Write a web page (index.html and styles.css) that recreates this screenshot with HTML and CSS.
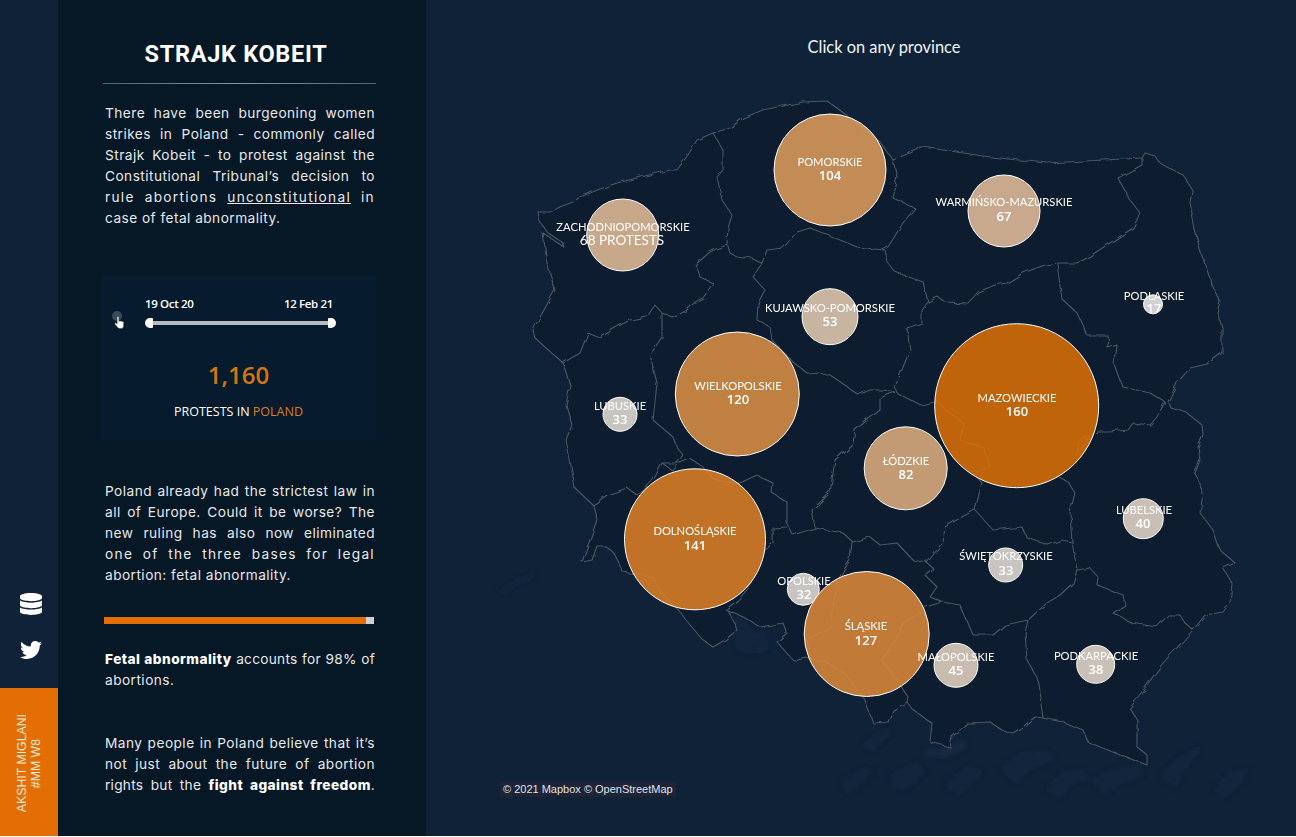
FILE: index.html
```html
<!DOCTYPE html>
<html lang="en">
<head>
  <meta charset="UTF-8">
  <title>Strajk Kobeit</title>
  <link rel="stylesheet" href="styles.css">
</head>
<body>
  <div class="page">

    <aside class="rail">
      <div class="rail-icons">
        <svg class="rail-icon" viewBox="0 0 448 512" preserveAspectRatio="none"><path d="M448 73.143v45.714C448 159.143 347.667 192 224 192S0 159.143 0 118.857V73.143C0 32.857 100.333 0 224 0s224 32.857 224 73.143zM448 176v102.857C448 319.143 347.667 352 224 352S0 319.143 0 278.857V176c48.125 33.143 136.208 48.572 224 48.572S399.874 209.143 448 176zm0 160v102.857C448 479.143 347.667 512 224 512S0 479.143 0 438.857V336c48.125 33.143 136.208 48.572 224 48.572S399.874 369.143 448 336z"/></svg>
        <svg class="rail-icon" viewBox="0 0 512 512"><path d="M459.37 151.716c.325 4.548.325 9.097.325 13.645 0 138.72-105.583 298.558-298.558 298.558-59.452 0-114.68-17.219-161.137-47.106 8.447.974 16.568 1.299 25.34 1.299 49.055 0 94.213-16.568 130.274-44.832-46.132-.975-84.792-31.188-98.112-72.772 6.498.974 12.995 1.624 19.818 1.624 9.421 0 18.843-1.3 27.614-3.573-48.081-9.747-84.143-51.98-84.143-102.985v-1.299c13.969 7.797 30.214 12.67 47.431 13.319-28.264-18.843-46.781-51.005-46.781-87.391 0-19.492 5.197-37.36 14.294-52.954 51.655 63.675 129.3 105.258 216.365 109.807-1.624-7.797-2.599-15.918-2.599-24.04 0-57.828 46.782-104.934 104.934-104.934 30.213 0 57.502 12.67 76.67 33.137 23.715-4.548 46.456-13.32 66.599-25.34-7.798 24.366-24.366 44.833-46.132 57.827 21.117-2.273 41.584-8.122 60.426-16.243-14.292 20.791-32.161 39.308-52.628 54.253z"/></svg>
      </div>
      <div class="author"><span>AKSHIT MIGLANI<br>#MM W8</span></div>
    </aside>

    <section class="panel">
      <h1>STRAJK KOBEIT</h1>
      <hr class="rule">

      <p class="copy intro">
        <span class="line">There have been burgeoning women</span>
        <span class="line">strikes in Poland - commonly called</span>
        <span class="line">Strajk Kobeit - to protest against the</span>
        <span class="line">Constitutional Tribunal’s decision to</span>
        <span class="line loose">rule abortions <u>unconstitutional</u> in</span>
        <span class="line">case of fetal abnormality.</span>
      </p>

      <div class="stat-card">
        <div class="timeline">
          <div class="play">
            <span class="play-dot"></span>
            <svg class="hand" viewBox="0 0 12 15"><path d="M3.4 1.2c0-1.200 1.900-1.200 1.900 0v4.400l.5-.1c.5-.6 1.400-.4 1.600.2.5-.5 1.400-.3 1.600.3.7-.3 1.500.1 1.500 1v3.400c0 1.800-1 3.100-2.700 3.100H6.100c-1 0-1.700-.5-2.300-1.300L1.100 8.800c-.7-1 .6-2 1.400-1.200l.9 1z" fill="#fff" stroke="#2a3644" stroke-width=".5"/></svg>
          </div>
          <div class="range">
            <div class="range-dates"><span>19 Oct 20</span><span>12 Feb 21</span></div>
            <div class="range-track">
              <span class="handle handle-left"></span>
              <span class="handle handle-right"></span>
            </div>
          </div>
        </div>
        <div class="stat-num">1,160</div>
        <div class="stat-label">PROTESTS IN <b>POLAND</b></div>
      </div>

      <p class="copy second">
        <span class="line">Poland already had the strictest law in</span>
        <span class="line">all of Europe. Could it be worse? The</span>
        <span class="line">new ruling has also now eliminated</span>
        <span class="line loose">one of the three bases for legal</span>
        <span class="line">abortion: fetal abnormality.</span>
      </p>

      <div class="share-bar"><div class="share-fill"></div></div>

      <p class="copy third">
        <span class="line tight"><strong>Fetal abnormality</strong> accounts for 98% of</span>
        <span class="line">abortions.</span>
      </p>

      <p class="copy fourth">
        <span class="line">Many people in Poland believe that it’s</span>
        <span class="line">not just about the future of abortion</span>
        <span class="line tight">rights but the <strong>fight against freedom</strong>.</span>
      </p>
    </section>

    <main class="map">
      <svg class="map-svg" viewBox="426 0 870 836">
        <defs>
          <filter id="soft"><feGaussianBlur stdDeviation="2.5"/></filter>
          <filter id="rough" x="-5%" y="-5%" width="110%" height="110%">
            <feTurbulence type="fractalNoise" baseFrequency="0.09" numOctaves="2" seed="4"/>
            <feDisplacementMap in="SourceGraphic" scale="5"/>
          </filter>
        </defs>

        <!-- relief south of the border -->
        <g class="relief" filter="url(#soft)">
          <path d="M497 592L519 578L537 572L532 579L514 586L505 594Z"/>
          <path d="M728 622L742 616L752 628L757 640L750 654L738 650L733 634Z"/>
          <path d="M756 632L768 630L768 650L756 654Z"/>
          <path d="M860 745L885 728L893 732L872 752Z"/>
          <path d="M840 785L862 768L875 770L850 795Z"/>
          <path d="M925 750L940 750L964 740L966 748L945 757L925 755Z" class="relief-light"/>
          <path d="M890 775L915 762L926 772L905 790L892 788Z"/>
          <path d="M945 785L968 765L985 772L975 780L960 796Z"/>
          <path d="M1000 768L1022 752L1046 750L1056 760L1030 770L1015 785Z"/>
          <path d="M1045 790L1062 772L1080 768L1090 778L1072 785L1060 798Z"/>
          <path d="M1090 780L1115 768L1140 764L1145 775L1120 784L1105 795Z"/>
          <path d="M1160 775L1178 758L1198 746L1200 752L1185 770L1175 790Z"/>
          <path d="M1213 790L1230 772L1250 768L1242 782L1225 798Z"/>
        </g>

        <!-- country -->
        <g filter="url(#rough)">
          <path class="land" d="M538 212L550 212L560 207L573 202L580 197L600 189L617 183L645 176L670 170L677 170L688 155L697 140L713 133L730 128L743 118L763 110L803 102L827 101L837 108L863 128L880 142L893 160L917 150L920 147L930 148L990 157L1047 163L1142 158L1145 153L1155 156L1160 163L1172 170L1183 175L1192 190L1190 203L1195 230L1200 250L1213 287L1220 302L1217 312L1222 327L1222 353L1207 364L1190 368L1177 383L1168 402L1170 407L1187 413L1202 425L1203 435L1198 447L1200 460L1195 473L1203 493L1200 513L1213 530L1220 550L1235 563L1223 568L1232 583L1230 603L1223 612L1205 615L1193 630L1163 663L1130 708L1137 720L1137 747L1147 755L1147 765L1120 755L1088 742L1083 730L1063 722L1043 718L1035 717L1024 726L1013 733L1002 730L990 722L967 723L952 737L950 747L930 742L932 723L913 710L907 702L893 710L888 722L873 723L865 700L850 680L843 672L825 662L805 657L793 660L777 642L787 633L783 623L760 627L740 615L727 610L733 620L737 630L725 640L713 647L703 640L690 625L680 612L660 590L653 577L640 575L623 572L613 552L605 546L597 546L592 560L582 562L597 520L593 505L575 488L570 460L566 440L572 425L566 405L570 385L563 363L535 338L533 330L555 290L547 263L543 233L565 248L563 243L547 232L540 222Z"/>

          <!-- provinces -->
          <g class="borders">
            <path d="M713 133L718 142L723 150L723 170L717 177L722 200L732 215L728 228L727 243L730 253L736 256L743 257L752 258L762 263"/>
            <path d="M727 245L716 249L710 252L695 265L700 277L713 283L703 298L695 302L687 310L673 318L662 313L655 305L647 317L630 320L615 328L600 338L588 333L580 353L563 363"/>
            <path d="M662 313L662 337L650 355L657 383L653 420L673 437L677 448L683 455L672 470L662 463L656 475L653 480L642 492L637 495L627 488L607 495L593 505"/>
            <path d="M662 463L680 463L690 459L702 466L712 478L728 483L740 483L757 475L773 483L772 493L787 502L787 523L793 535L815 528"/>
            <path d="M787 527L773 528L773 543L765 550"/>
            <path d="M753 583L738 600L725 610"/>
            <path d="M815 528L812 510L830 493L835 460L853 443L855 430L880 410L880 398L895 392"/>
            <path d="M762 263L753 277L765 290L758 303L757 320L770 327L772 340L793 362L807 373L818 372L830 375L845 385L858 395L870 390L883 390L895 392"/>
            <path d="M762 263L767 250L783 248L797 232L810 228L823 233L840 240L857 247L883 250"/>
            <path d="M893 160L897 177L892 197L915 208L903 223L888 247L883 250"/>
            <path d="M885 250L888 263L895 272L923 282L928 302L938 297L945 302L968 303L978 292L995 285L1007 283L1023 273L1045 265L1058 263L1077 263L1087 258L1107 245L1133 228L1140 213L1130 200L1118 178L1142 165L1142 158"/>
            <path d="M928 302L922 310L922 323L907 328L910 350L895 387L897 393L920 405L935 402"/>
            <path d="M1058 263L1060 280L1063 300L1077 313L1087 335L1107 335L1108 348L1117 345L1115 365L1123 387L1150 393L1165 402"/>
            <path d="M1165 402L1157 417L1150 425L1133 423L1128 430L1110 432L1097 432"/>
            <path d="M1097 432L1079 442L1075 455L1093 436"/>
            <path d="M1060 478L1068 482L1075 493L1070 513L1071 528L1072 542L1077 570"/>
            <path d="M935 400L950 413L963 423L960 440L983 447L990 467L973 473L982 483L975 510"/>
            <path d="M975 510L984 520L993 530L1022 527L1027 538L1048 545L1062 540L1072 542"/>
            <path d="M975 510L960 518L945 527L943 542L927 563L933 568L925 575L937 587L930 597L942 602L960 605L968 623L973 635L993 635L1005 625L1028 620"/>
            <path d="M927 563L913 560L897 543L880 545L870 537L853 542L843 533L815 528"/>
            <path d="M852 542L850 560L842 573L838 580L833 607L830 627L807 640L810 657"/>
            <path d="M942 602L923 608L925 612L903 623L900 633L882 660L897 680L908 697L907 702"/>
            <path d="M1028 620L1025 633L1027 660L1037 677L1040 697L1043 718"/>
            <path d="M1077 570L1073 583L1060 595L1047 603L1028 620"/>
            <path d="M1077 570L1090 568L1098 577L1097 585L1123 595L1125 605L1113 613L1132 623L1157 627L1168 615L1180 615L1185 623L1193 630"/>
          </g>
        </g>

        <!-- protests per province -->
        <g class="bubbles">
          <circle cx="830" cy="170" r="56" fill="#dd9c5c"/>
          <circle cx="622.700" cy="235" r="36" fill="#e2bc99"/>
          <circle cx="830" cy="316.700" r="28" fill="#e3cbb2"/>
          <circle cx="737.300" cy="394" r="62" fill="#da8e44"/>
          <circle cx="620" cy="414.300" r="17" fill="#e3ddd6"/>
          <circle cx="1004" cy="211" r="36" fill="#e2bd9b"/>
          <circle cx="1153" cy="304.300" r="9.500" fill="#edebe9"/>
          <circle cx="1016.700" cy="405.700" r="82" fill="#d96e07"/>
          <circle cx="905.700" cy="468.300" r="41.500" fill="#dcad80"/>
          <circle cx="695" cy="539.300" r="70.500" fill="#db7e26"/>
          <circle cx="803.300" cy="589.300" r="16" fill="#e3ddd6"/>
          <circle cx="866.700" cy="634" r="62.500" fill="#db8839"/>
          <circle cx="1143.300" cy="518.700" r="20" fill="#e4d6c8"/>
          <circle cx="1005.700" cy="565" r="17" fill="#e3dcd4"/>
          <circle cx="956" cy="665.300" r="22" fill="#e4d2c0"/>
          <circle cx="1095.700" cy="664.300" r="19" fill="#e4d7ca"/>
        </g>

        <g class="labels">
          <text x="830" y="166">POMORSKIE</text><text class="count" x="830" y="180">104</text>
          <text x="623" y="231">ZACHODNIOPOMORSKIE</text><text class="count wide" x="622" y="245">68 PROTESTS</text>
          <text x="830" y="312">KUJAWSKO-POMORSKIE</text><text class="count" x="830" y="326">53</text>
          <text x="738" y="390">WIELKOPOLSKIE</text><text class="count" x="738" y="404">120</text>
          <text x="620" y="410">LUBUSKIE</text><text class="count" x="620" y="424">33</text>
          <text x="1004" y="206">WARMIŃSKO-MAZURSKIE</text><text class="count" x="1004" y="221">67</text>
          <text x="1154" y="300">PODLASKIE</text><text class="count" x="1154" y="313">17</text>
          <text x="1017" y="402">MAZOWIECKIE</text><text class="count" x="1017" y="416">160</text>
          <text x="906" y="465">ŁÓDZKIE</text><text class="count" x="906" y="479">82</text>
          <text x="695" y="535">DOLNOŚLĄSKIE</text><text class="count" x="695" y="550">141</text>
          <text x="804" y="585">OPOLSKIE</text><text class="count" x="804" y="599">32</text>
          <text x="866" y="630">ŚLĄSKIE</text><text class="count" x="866" y="645">127</text>
          <text x="1144" y="514">LUBELSKIE</text><text class="count" x="1143" y="528">40</text>
          <text x="1006" y="560">ŚWIĘTOKRZYSKIE</text><text class="count" x="1006" y="575">33</text>
          <text x="956" y="661">MAŁOPOLSKIE</text><text class="count" x="956" y="675">45</text>
          <text x="1096" y="660">PODKARPACKIE</text><text class="count" x="1096" y="674">38</text>
        </g>
      </svg>

      <div class="map-hint">Click on any province</div>
      <div class="attrib">© 2021 Mapbox © OpenStreetMap</div>
    </main>

  </div>
</body>
</html>
```

FILE: styles.css
```css
/* ========== base ========== */
html, body {
  margin: 0;
  padding: 0;
  background: #fff;
  overflow: hidden;
}
.page {
  display: flex;
  height: 836px;
  color: #fff;
}

/* ========== left rail ========== */
.rail {
  width: 58px;
  flex: none;
  background: #0f2238;
  display: flex;
  flex-direction: column;
  justify-content: flex-end;
}
.rail-icons {
  display: flex;
  flex-direction: column;
  align-items: center;
  gap: 24px;
  padding: 0 0 27px 3px;
}
.rail-icon {
  width: 22px;
  height: 22px;
  fill: #fff;
}
.author {
  height: 148px;
  background: #e36f04;
  display: flex;
  align-items: flex-end;
  justify-content: center;
  padding-bottom: 24px;
  box-sizing: border-box;
}
.author span {
  writing-mode: vertical-rl;
  transform: rotate(180deg);
  font-family: "Liberation Sans", Arial, sans-serif;
  font-size: 12.3px;
  line-height: 14px;
  text-align: center;
  color: #f8eadc;
}

/* ========== text panel ========== */
.panel {
  width: 368px;
  flex: none;
  box-sizing: border-box;
  background: #061725;
  padding: 0 50px 0 45px;
}
.panel h1 {
  margin: 39px 7px 0 0;
  font-family: Roboto, Arial, sans-serif;
  font-size: 23.5px;
  line-height: 30px;
  font-weight: 700;
  letter-spacing: 0.7px;
  text-align: center;
}
.rule {
  height: 1px;
  border: none;
  margin: 14px 0 0;
  background: linear-gradient(90deg, #56616c, #8d969e 50%, #56616c);
}
.copy {
  margin: 0;
  padding: 0 1px 0 2px;
  font-family: Inter, Arial, sans-serif;
  font-size: 13.7px;
  line-height: 21px;
  letter-spacing: 0.45px;
  color: #e6e8ea;
}
.line {
  display: block;
  text-align: justify;
  text-align-last: justify;
}
.line:last-child {
  text-align-last: left;
}
.line.loose {
  letter-spacing: 1.3px;
}
.line.tight {
  letter-spacing: 0.25px;
  white-space: nowrap;
}
.copy strong {
  font-weight: 800;
  letter-spacing: 0.45px;
  color: #fff;
}
.intro {
  margin-top: 19px;
}
.second {
  margin-top: 41px;
}
.third {
  margin-top: 25px;
}
.fourth {
  margin-top: 42px;
}
.fourth .line:last-child {
  text-align-last: justify;
}

/* ========== stat card ========== */
.stat-card {
  margin: 47px 0 0 -2px;
  height: 164px;
  background: #061b2e;
  padding-top: 20px;
  box-sizing: border-box;
  font-family: "Open Sans", Arial, sans-serif;
  text-align: center;
}
.timeline {
  display: flex;
  height: 34px;
}
.play {
  position: relative;
  width: 44px;
  flex: none;
}
.play-dot {
  position: absolute;
  left: 11px;
  top: 15px;
  width: 10px;
  height: 10px;
  border-radius: 50%;
  background: #3d4a59;
}
.hand {
  position: absolute;
  left: 13px;
  top: 20px;
  width: 11px;
  height: 14px;
}
.range {
  width: 191px;
}
.range-dates {
  display: flex;
  justify-content: space-between;
  padding: 0 3px 0 0;
  font-size: 11.5px;
  line-height: 16px;
  font-weight: 600;
  letter-spacing: -0.35px;
}
.range-track {
  position: relative;
  height: 4px;
  margin: 9px 0 0 4px;
  width: 183px;
  background: #b9bcbf;
}
.handle {
  position: absolute;
  top: -3px;
  width: 8px;
  height: 10px;
  background: #fff;
}
.handle-left {
  left: -4px;
  border-radius: 5px 1px 1px 5px;
}
.handle-right {
  right: -4px;
  border-radius: 1px 5px 5px 1px;
}
.stat-num {
  margin-top: 29px;
  font-size: 24px;
  line-height: 32px;
  font-weight: 600;
  color: #d4760f;
}
.stat-label {
  margin-top: 13px;
  font-size: 12.5px;
  line-height: 16px;
}
.stat-label b {
  font-weight: 400;
  color: #dc7c1c;
}

/* ========== 98% bar ========== */
.share-bar {
  height: 7px;
  margin: 31px 2px 0 1px;
  background: #cfd1d3;
}
.share-fill {
  width: 97%;
  height: 100%;
  background: #e36f04;
}

/* ========== map ========== */
.map {
  position: relative;
  flex: 1;
  background: #0f2238;
}
.map-svg {
  display: block;
  width: 100%;
  height: 100%;
}
.land {
  fill: #0a1c2e;
  stroke: #4d5864;
  stroke-width: 1.1;
  stroke-linejoin: round;
}
.borders path {
  fill: none;
  stroke: #4d5864;
  stroke-width: 1.1;
  stroke-linejoin: round;
}
.relief path {
  fill: #1a2e45;
  opacity: 0.3;
}
.relief .relief-light {
  fill: #2b4058;
}
.bubbles circle {
  stroke: #fff;
  stroke-width: 1;
  fill-opacity: 0.88;
}
.labels text {
  font-family: Lato, Arial, sans-serif;
  font-size: 11.2px;
  fill: #fff;
  text-anchor: middle;
}
.labels .count {
  font-family: "Open Sans", Arial, sans-serif;
  font-size: 13px;
  font-weight: 600;
}
.labels .wide {
  font-family: Lato, Arial, sans-serif;
  font-size: 13.5px;
  font-weight: 400;
}
.map-hint {
  position: absolute;
  left: 0;
  width: 916px;
  top: 37px;
  text-align: center;
  font-family: Lato, Arial, sans-serif;
  font-size: 16.4px;
  line-height: 20px;
  color: #f2f4f6;
}
.attrib {
  position: absolute;
  left: 74px;
  top: 782px;
  padding: 0 3px;
  background: #1f2336;
  font-family: "Liberation Sans", Arial, sans-serif;
  font-size: 11px;
  line-height: 15px;
  color: #dfe2e6;
}
```
